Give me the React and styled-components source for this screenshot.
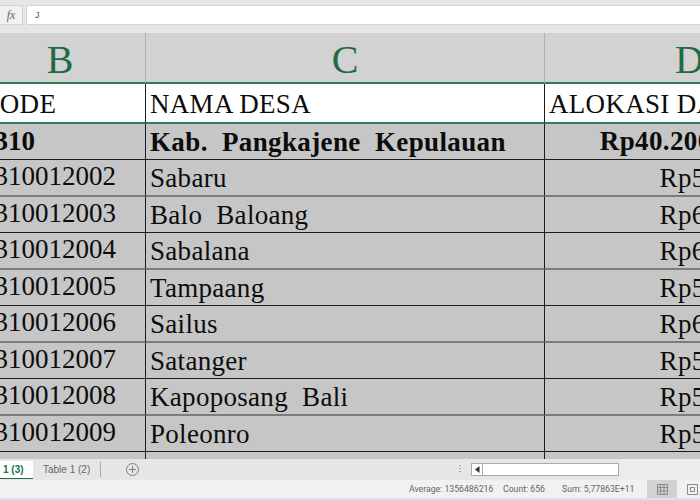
import { Fragment } from "react";
import styled, { createGlobalStyle } from "styled-components";

const GlobalStyle = createGlobalStyle`
  html, body {
    margin: 0;
    padding: 0;
    overflow: hidden;
  }
`;

const rows = [
  ["7310012002", "Sabaru", "Rp500.000.000"],
  ["7310012003", "Balo  Baloang", "Rp600.000.000"],
  ["7310012004", "Sabalana", "Rp600.000.000"],
  ["7310012005", "Tampaang", "Rp500.000.000"],
  ["7310012006", "Sailus", "Rp600.000.000"],
  ["7310012007", "Satanger", "Rp500.000.000"],
  ["7310012008", "Kapoposang  Bali", "Rp500.000.000"],
  ["7310012009", "Poleonro", "Rp500.000.000"],
  ["", "", ""],
];

const Window = styled.div`
  width: 700px;
  height: 500px;
  display: flex;
  flex-direction: column;
  background: #e6e6e6;
  overflow: hidden;
  font-family: "Liberation Sans", Arial, sans-serif;
`;

const FormulaBar = styled.div`
  height: 33px;
  box-sizing: border-box;
  padding: 5px 0 8px;
  display: flex;
  gap: 3px;
  flex: none;
`;

const FxBox = styled.div`
  width: 23px;
  background: #f1f1f1;
  border: 1px solid #d4d4d4;
  border-left: none;
  box-sizing: border-box;
  color: #666;
  font: italic 12px "Liberation Serif", serif;
  display: flex;
  align-items: center;
  justify-content: center;
`;

const FormulaInput = styled.div`
  flex: 1;
  background: #fff;
  border: 1px solid #d4d4d4;
  border-right: none;
  box-sizing: border-box;
  padding-left: 8px;
  font: 9px "Liberation Sans", sans-serif;
  color: #553;
  display: flex;
  align-items: center;
`;

const Sheet = styled.div`
  flex: none;
  height: 426px;
  overflow: hidden;
  background: #c6c6c6;
`;

const Grid = styled.div`
  display: grid;
  grid-template-columns: 171px 399px 290px;
  margin-left: -25px;
  width: 860px;
`;

const ColumnHead = styled.div`
  height: 51px;
  box-sizing: border-box;
  padding-top: 4px;
  background: #d2d2d2;
  border-right: 1px solid #b0b0b0;
  border-bottom: 2px solid #2f7d55;
  color: #1f6b45;
  font: 40px "Liberation Serif", serif;
  display: flex;
  align-items: center;
  justify-content: center;
`;

const Cell = styled.div`
  height: ${(p) => p.$height}px;
  box-sizing: border-box;
  padding: ${(p) => p.$top || 0}px 4px ${(p) => p.$bottom || 0}px;
  background: ${(p) => (p.$head ? "#fff" : "#c6c6c6")};
  border-right: 1px solid #1c1c1c;
  border-bottom: ${(p) => p.$line};
  color: #0c0c0c;
  font: ${(p) => (p.$bold ? "bold " : "")}27px "Liberation Serif", serif;
  letter-spacing: ${(p) => (p.$bold ? "0.37px" : "0.3px")};
  white-space: pre;
  overflow: hidden;
  display: flex;
  align-items: center;
  justify-content: ${(p) => (p.$right ? "flex-end" : "flex-start")};
`;

// codes sit a little higher and further in than the names beside them
const CodeCell = styled(Cell)`
  padding-left: ${(p) => (p.$tight ? "6px" : "5px")};
  letter-spacing: ${(p) => (p.$tight ? "0" : "0.3px")};
`;

const TabBar = styled.div`
  height: 21px;
  flex: none;
  display: flex;
  align-items: center;
  background: #e6e6e6;
  font-size: 10px;
  color: #666;
`;

const ActiveTab = styled.div`
  width: 33px;
  height: 18px;
  box-sizing: border-box;
  background: #fff;
  border-bottom: 1px solid #217346;
  color: #217346;
  font-weight: bold;
  padding-left: 3px;
  display: flex;
  align-items: center;
`;

const Tab = styled.div`
  padding: 0 10px;
  height: 15px;
  border-right: 1px solid #aaa;
  display: flex;
  align-items: center;
`;

const AddSheet = styled.div`
  margin-left: 25px;
  height: 13px;
`;

const ScrollArea = styled.div`
  margin-left: auto;
  width: 241px;
  display: flex;
  align-items: center;
  height: 21px;
  gap: 10px;
`;

const SplitDots = styled.div`
  width: 2px;
  height: 9px;
  background: repeating-linear-gradient(#aaa 0 1px, transparent 1px 3px);
`;

const ScrollBarTrack = styled.div`
  width: 148px;
  height: 13px;
  box-sizing: border-box;
  border: 1px solid #aaa;
  background: #fff;
  display: flex;
`;

const ScrollArrow = styled.div`
  width: 11px;
  box-sizing: border-box;
  border-right: 1px solid #aaa;
  display: flex;
  align-items: center;
  justify-content: center;
`;

const ScrollRest = styled.div`
  flex: 1;
  align-self: stretch;
  background: #ececec;
  margin-left: -10px;
`;

const StatusBar = styled.div`
  height: 18px;
  flex: none;
  background: #f1f1f1;
  display: flex;
  align-items: center;
  font: 8.7px Roboto, "Liberation Sans", sans-serif;
  color: #666;
  padding-left: 409px;
  white-space: nowrap;
`;

const StatusText = styled.span`
  width: ${(p) => p.$width}px;
  flex: none;
`;

const ViewButton = styled.div`
  width: 30px;
  flex: none;
  height: 100%;
  background: ${(p) => (p.$active ? "#d2d2d2" : "transparent")};
  display: flex;
  align-items: center;
  justify-content: center;
`;

const BottomEdge = styled.div`
  flex: 1;
  background: #d6e2f2;
`;

const AddSheetIcon = () => (
  <svg width="13" height="13" viewBox="0 0 13 13" fill="none" stroke="#808080">
    <circle cx="6.5" cy="6.5" r="6" />
    <path d="M6.5 3v7M3 6.5h7" />
  </svg>
);

const NormalViewIcon = () => (
  <svg width="11" height="11" viewBox="0 0 11 11" fill="none" stroke="#8a8a8a">
    <path d="M.5.5h10v10H.5zM.5 3.5h10M.5 7h10M3.5.5v10M7 .5v10" />
  </svg>
);

const PageViewIcon = () => (
  <svg width="11" height="11" viewBox="0 0 11 11" fill="none" stroke="#8a8a8a">
    <path d="M.5.5h10v10H.5zM3.5 3.5h4v4h-4z" />
  </svg>
);

const GREEN_LINE = "2px solid #2f7d55";
const DARK_LINE = "1px solid #1c1c1c";
const SOFT_LINE = "2px solid #7c7c7c";

const App = () => {
  return (
    <Window>
      <GlobalStyle />
      <FormulaBar>
        <FxBox>fx</FxBox>
        <FormulaInput>J</FormulaInput>
      </FormulaBar>
      <Sheet>
        <Grid>
          <ColumnHead>B</ColumnHead>
          <ColumnHead>C</ColumnHead>
          <ColumnHead>D</ColumnHead>
          <CodeCell $head $height={40} $top={2} $line={GREEN_LINE}>KODE</CodeCell>
          <Cell $head $height={40} $top={2} $line={GREEN_LINE}>NAMA DESA</Cell>
          <Cell $head $height={40} $top={2} $line={GREEN_LINE}>ALOKASI DANA DESA</Cell>
          <CodeCell $bold $tight $height={36} $bottom={1} $line={DARK_LINE}>7310</CodeCell>
          <Cell $bold $height={36} $top={1} $line={DARK_LINE}>Kab.  Pangkajene  Kepulauan</Cell>
          <Cell $bold $right $height={36} $line={DARK_LINE}>Rp40.200.000.000,0</Cell>
          {rows.map(([code, name, amount], i) => {
            const soft = i % 2 === 0;
            const height = soft ? 37 : 36;
            const line = soft ? SOFT_LINE : DARK_LINE;
            return (
              <Fragment key={i}>
                <CodeCell $tight $height={height} $bottom={3} $line={line}>{code}</CodeCell>
                <Cell $height={height} $top={1} $line={line}>{name}</Cell>
                <Cell $right $height={height} $top={1} $line={line}>{amount}</Cell>
              </Fragment>
            );
          })}
        </Grid>
      </Sheet>
      <TabBar>
        <ActiveTab>1 (3)</ActiveTab>
        <Tab>Table 1 (2)</Tab>
        <AddSheet><AddSheetIcon /></AddSheet>
        <ScrollArea>
          <SplitDots />
          <ScrollBarTrack>
            <ScrollArrow>
              <svg width="5" height="7" viewBox="0 0 5 7">
                <path d="M4.5 0v7L0 3.5z" fill="#333" />
              </svg>
            </ScrollArrow>
          </ScrollBarTrack>
          <ScrollRest />
        </ScrollArea>
      </TabBar>
      <StatusBar>
        <StatusText $width={94}>Average: 1356486216</StatusText>
        <StatusText $width={59}>Count: 656</StatusText>
        <StatusText $width={85}>Sum: 5,77863E+11</StatusText>
        <ViewButton $active><NormalViewIcon /></ViewButton>
        <ViewButton><PageViewIcon /></ViewButton>
      </StatusBar>
      <BottomEdge />
    </Window>
  );
};

export default App;
